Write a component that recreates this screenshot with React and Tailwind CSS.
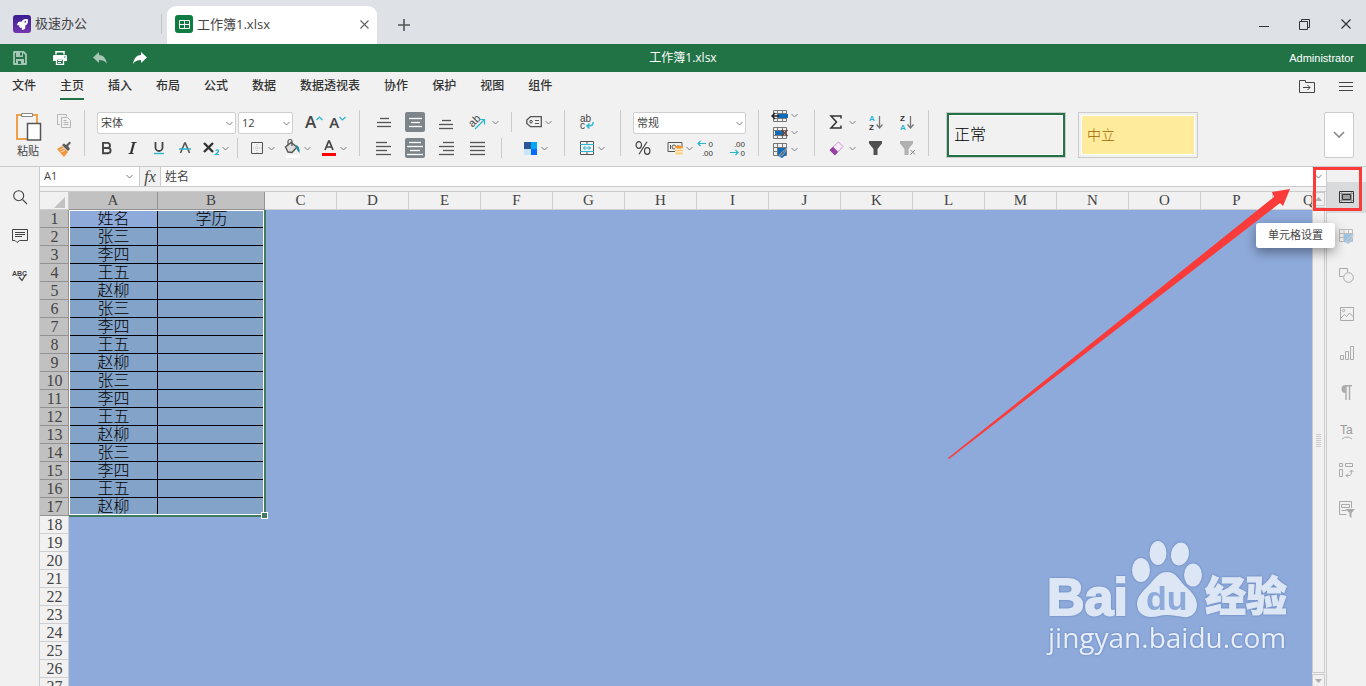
import React, { useState } from 'react';
import { FaRocket } from 'react-icons/fa';

const MENU = ['文件', '主页', '插入', '布局', '公式', '数据', '数据透视表', '协作', '保护', '视图', '组件'];
const COLUMNS = 'ABCDEFGHIJKLMNOPQ'.split('');
const NAMES = ['张三', '李四', '王五', '赵柳'];
const ROW_COUNT = 27;
const LAST_SELECTED = 17;

// rows 2..17 repeat the same four names
const nameOf = (row) => (row === 1 ? '姓名' : NAMES[(row - 2) % 4]);

const Svg = ({ w, h, children, className = '' }) => (
  <svg width={w} height={h} viewBox={`0 0 ${w} ${h}`} fill="none" className={`shrink-0 overflow-visible ${className}`}>
    {children}
  </svg>
);

const Chevron = ({ className = '' }) => (
  <Svg w={7} h={5} className={className}>
    <path d="M.5 1l3 3 3-3" stroke="#7f7f7f" />
  </Svg>
);

const IconButton = ({ label, active = false, children }) => (
  <button
    aria-label={label}
    className={`flex h-5 w-5 shrink-0 items-center justify-center rounded-xs ${active ? 'bg-[#7d858c]' : ''}`}
  >
    {children}
  </button>
);

const MenuArrow = ({ label }) => (
  <button aria-label={label} className="flex h-5 w-2 shrink-0 items-center justify-center">
    <Chevron />
  </button>
);

const Separator = () => <div className="mt-[3px] h-[46px] w-px shrink-0 bg-[#cbcbcb]" />;
const SmallSeparator = () => <div className="h-5 w-px shrink-0 bg-[#cbcbcb]" />;

const Dropdown = ({ label, options, className }) => (
  <div className={`relative h-[22px] shrink-0 ${className}`}>
    <select
      aria-label={label}
      className="block h-full w-full appearance-none rounded-xs border border-[#cfcfcf] bg-white pl-[3px] text-[11px] leading-5 text-[#444]"
    >
      {options.map((o) => (
        <option key={o}>{o}</option>
      ))}
    </select>
    <Chevron className="pointer-events-none absolute right-[3px] top-[9px]" />
  </div>
);

const Lines = ({ rows, color = '#555' }) => (
  <Svg w={16} h={15}>
    {rows.map(([x1, x2, y]) => (
      <path key={y} d={`M${x1} ${y}.5H${x2}`} stroke={color} strokeWidth="1.3" />
    ))}
  </Svg>
);

/* ---------- top bars ---------- */

const TabStrip = () => (
  <div className="flex h-11 shrink-0 bg-[#dee1e6] text-[13px] text-[#444]">
    <button className="flex w-[161px] items-center gap-1 pl-[13px] pt-1">
      <span className="flex h-[18px] w-[18px] items-center justify-center rounded-[3px] bg-linear-to-b from-[#3a1c93] to-[#7436ae]">
        <FaRocket size={11} color="#fff" />
      </span>
      极速办公
    </button>
    <div className="mt-[14px] h-5 w-px bg-[#c0c3c7]" />
    <div className="ml-[5px] mt-[6px] flex w-[210px] items-center rounded-t-[9px] bg-white px-2 pb-[2px]">
      <span className="mr-1 flex h-[18px] w-[18px] items-center justify-center rounded-[3px] bg-[#107c41]">
        <Svg w={11} h={9}>
          <path d="M.5.5h10v8H.5zM5.5.5v8M.5 4.5h10" stroke="#fff" />
        </Svg>
      </span>
      <span className="flex-1 pt-[2px]">工作簿1.xlsx</span>
      <button aria-label="关闭标签">
        <Svg w={9} h={9}>
          <path d="M.5.5l8 8M8.500.5l-8 8" stroke="#666" strokeWidth="1.2" />
        </Svg>
      </button>
    </div>
    <button aria-label="新建标签" className="ml-[21px] pt-[6px]">
      <Svg w={12} h={12}>
        <path d="M6 0v12M0 6h12" stroke="#555" strokeWidth="1.6" />
      </Svg>
    </button>
    <div className="ml-auto flex pt-1">
      <button aria-label="最小化" className="flex w-[41px] items-center justify-center">
        <Svg w={10} h={11}>
          <path d="M0 7.5h10" stroke="#333" />
        </Svg>
      </button>
      <button aria-label="还原" className="flex w-[41px] items-center justify-center">
        <Svg w={11} h={11}>
          <path d="M.5 2.5h8v8h-8zM2.500 2.500v-2h8v8h-2" stroke="#333" />
        </Svg>
      </button>
      <button aria-label="关闭" className="flex w-[41px] items-center justify-center">
        <Svg w={10} h={10}>
          <path d="M.5.5l9 9M9.500.5l-9 9" stroke="#333" strokeWidth="1.2" />
        </Svg>
      </button>
    </div>
  </div>
);

const TitleBar = () => (
  <header className="grid h-7 shrink-0 grid-cols-3 items-center bg-[#217346] text-xs text-white">
    <div className="flex gap-5 pl-[10px]">
      <IconButton label="保存">
        <Svg w={14} h={14}>
          <path d="M1 1h9.500L13 3.500V13H1z" stroke="#a6c7b5" strokeWidth="1.8" strokeLinejoin="round" />
          <path d="M3 1h7v5H3zM3 8h8v5H3z" fill="#a6c7b5" />
          <path d="M7 1.500h2v3H7zM5 10h3v3H5z" fill="#217346" />
        </Svg>
      </IconButton>
      <IconButton label="打印">
        <Svg w={14} h={14}>
          <path d="M3 3.500V.8h8v2.700" stroke="#fff" strokeWidth="1.5" />
          <path d="M1 4h12a1 1 0 011 1v5h-3V8H3v2H0V5a1 1 0 011-1z" fill="#fff" />
          <path d="M3.500 8h7v5.300h-7z" fill="#217346" stroke="#fff" strokeWidth="1.3" />
          <path d="M5 9.500h4M5 11.500h3" stroke="#fff" />
          <path d="M11 6h1.500" stroke="#217346" />
        </Svg>
      </IconButton>
      <IconButton label="撤销">
        <Svg w={14} h={12}>
          <path d="M6 0v3c4 0 7 3 8 9-2-3-4-4-8-4v3L0 5.500z" fill="#a6c7b5" />
        </Svg>
      </IconButton>
      <IconButton label="重做">
        <Svg w={14} h={12}>
          <path d="M8 0v3C4 3 1 6 0 12c2-3 4-4 8-4v3l6-5.500z" fill="#fff" />
        </Svg>
      </IconButton>
    </div>
    <div className="text-center">工作簿1.xlsx</div>
    <div className="pr-3 text-right font-['Liberation_Sans',sans-serif] text-[11px] leading-4">Administrator</div>
  </header>
);

const MenuBar = () => {
  const [current, setCurrent] = useState('主页');
  return (
    <nav className="flex h-[33px] shrink-0 items-start gap-6 px-3 text-xs font-medium text-[#333]">
      {MENU.map((m) => (
        <button
          key={m}
          onClick={() => setCurrent(m)}
          className={`h-7 shrink-0 border-b-2 pt-[2px] ${m === current ? 'border-[#217346]' : 'border-transparent'}`}
        >
          {m}
        </button>
      ))}
      <div className="ml-auto flex items-center gap-6 pr-px pt-2">
        <button aria-label="打开文件位置">
          <Svg w={16} h={13}>
            <path d="M.5.5h6v2h9v10H.5zM4 7.500h7M8.500 5L11 7.500 8.500 10" stroke="#444" />
          </Svg>
        </button>
        <button aria-label="更多">
          <Svg w={14} h={13}>
            <path d="M0 2.500h14M0 6.500h14M0 10.500h14" stroke="#444" />
          </Svg>
        </button>
      </div>
    </nav>
  );
};

/* ---------- ribbon ---------- */

const Rows = ({ children }) => <div className="mt-[5px] flex flex-col gap-1">{children}</div>;
const FirstRow = ({ children }) => <div className="flex h-[22px] items-start">{children}</div>;
const SecondRow = ({ children }) => <div className="flex h-5 items-center">{children}</div>;

const ClipboardGroup = () => (
  <div className="flex w-[84px] shrink-0 gap-3 pl-[14px]">
    <button className="mt-[5px] flex w-7 flex-col items-center text-[11px] leading-[18px] text-[#444]">
      <Svg w={28} h={30}>
        <path d="M3 3h20v24H3z" fill="#f4f4f4" stroke="#f0a04b" strokeWidth="2" />
        <path d="M7.500 1.500h11v3h-11z" fill="#fff" stroke="#888" />
        <path d="M13.500 11.500h13v16.500h-13z" fill="#fff" stroke="#555" strokeWidth="1.5" />
      </Svg>
      粘贴
    </button>
    <Rows>
      <FirstRow>
        <IconButton label="复制">
          <Svg w={16} h={16}>
            <path d="M4 10.500H1.500V.5h9v2" stroke="#b5b5b5" />
            <path d="M5.500 3.500h6l3 3v7h-9zM7.500 6.500h3M7.500 8.500h5M7.500 10.500h5" stroke="#b5b5b5" />
          </Svg>
        </IconButton>
      </FirstRow>
      <SecondRow>
        <IconButton label="格式刷">
          <Svg w={16} h={16}>
            <path d="M1 9l5-3 6 6-4 5z" fill="#f0963c" />
            <path d="M4 10l4-2M5 12l4-2" stroke="#fbe0c4" />
            <path d="M6 5l6 6 2-2-2-3 3-3-1.500-1.500L10 5 8 3.500z" fill="#5a5a5a" />
          </Svg>
        </IconButton>
      </SecondRow>
    </Rows>
  </div>
);

const FontGroup = () => (
  <div className="w-[274px] shrink-0 pl-3 text-[#444]">
    <Rows>
      <FirstRow>
        <Dropdown label="字体" options={['宋体', '黑体', '楷体']} className="w-[139px]" />
        <Dropdown label="字号" options={['12', '14', '16']} className="ml-[2px] w-[55px]" />
        <button aria-label="增大字号" className="ml-3 flex h-5 items-start text-[17px] font-semibold leading-5">
          A
          <Svg w={7} h={5} className="mt-1">
            <path d="M.5 4l3-3 3 3" stroke="#27b5cf" strokeWidth="1.2" />
          </Svg>
        </button>
        <button aria-label="减小字号" className="ml-[6px] flex h-5 items-start text-[15px] font-semibold leading-5">
          A
          <Svg w={7} h={5} className="mt-1">
            <path d="M.5 1l3 3 3-3" stroke="#27b5cf" strokeWidth="1.2" />
          </Svg>
        </button>
      </FirstRow>
      <SecondRow>
        <div className="flex gap-[6px]">
          <IconButton label="加粗">
            <Svg w={12} h={14}>
              <path
                d="M2 1.900h4.500a2.500 2.500 0 010 5H2zM2 7h5a2.600 2.600 0 010 5.200H2z"
                stroke="#444"
                strokeWidth="1.9"
              />
            </Svg>
          </IconButton>
          <IconButton label="倾斜">
            <Svg w={10} h={14}>
              <path d="M3.500 1.500h5M.5 12.500h5" stroke="#333" strokeWidth="1.2" />
              <path d="M6 1.500L3 12.500" stroke="#333" strokeWidth="2.2" />
            </Svg>
          </IconButton>
          <IconButton label="下划线">
            <Svg w={12} h={14}>
              <path d="M2.500 1v5.500a3.500 3.500 0 007 0V1" stroke="#444" strokeWidth="1.8" />
              <path d="M1 12.500h10" stroke="#27b5cf" strokeWidth="1.4" />
            </Svg>
          </IconButton>
          <IconButton label="删除线">
            <Svg w={12} h={14}>
              <path d="M1.500 12L5.700 2h.6l4.200 10" stroke="#555" strokeWidth="1.6" />
              <path d="M0 8h12" stroke="#27b5cf" strokeWidth="1.5" />
            </Svg>
          </IconButton>
          <IconButton label="下标">
            <Svg w={16} h={14}>
              <path d="M1 2l9 9M10 2l-9 9" stroke="#333" strokeWidth="2.4" />
              <path d="M12.500 9.500q3-1.500 3 .5 0 1-3 3.500h3.500" stroke="#27b5cf" strokeWidth="1.2" />
            </Svg>
          </IconButton>
        </div>
        <MenuArrow label="上下标选项" />
        <div className="ml-2">
          <SmallSeparator />
        </div>
        <div className="ml-[9px] flex gap-2">
          <div className="flex">
            <IconButton label="边框">
              <Svg w={12} h={12}>
                <path d="M.5.5h11v11H.5z" stroke="#555" />
                <path d="M6 2v9M2 6h9" stroke="#bbb" strokeDasharray="1 1" />
              </Svg>
            </IconButton>
            <MenuArrow label="边框选项" />
          </div>
          <div className="flex">
            <IconButton label="填充颜色">
              <Svg w={18} h={20}>
                <path d="M2 17h14v3H2z" fill="#fff" />
                <path d="M1.500 9L7 4.500 13 9l-5 5.500-4-.5z" fill="#ddd" stroke="#555" strokeWidth="1.4" />
                <path d="M4 7V3.500a2 2 0 014 0V8" stroke="#555" strokeWidth="1.2" />
                <path d="M11 7q5 0 4.500 8-2-1-3-5z" fill="#1d8b9e" />
              </Svg>
            </IconButton>
            <MenuArrow label="填充颜色选项" />
          </div>
          <div className="flex">
            <IconButton label="字体颜色">
              <Svg w={14} h={16}>
                <path d="M3 10L6.700 1h.6L11 10M4.500 7h5" stroke="#444" strokeWidth="1.7" />
                <path d="M0 13h14v3H0z" fill="#f00" />
              </Svg>
            </IconButton>
            <MenuArrow label="字体颜色选项" />
          </div>
        </div>
      </SecondRow>
    </Rows>
  </div>
);

const AlignGroup = () => (
  <div className="w-[204px] shrink-0 pl-[14px]">
    <Rows>
      <FirstRow>
        <div className="flex gap-[11px]">
          <IconButton label="顶端对齐">
            <Lines rows={[[4, 13, 3], [1, 15, 7], [1, 15, 11]]} />
          </IconButton>
          <IconButton label="垂直居中" active>
            <Lines color="#fff" rows={[[2, 15, 3], [4, 13, 7], [2, 15, 11]]} />
          </IconButton>
          <IconButton label="底端对齐">
            <Lines rows={[[4, 13, 5], [1, 15, 9], [1, 15, 13]]} />
          </IconButton>
          <IconButton label="文字方向">
            <Svg w={18} h={18}>
              <text x="1" y="12" transform="rotate(-45 6 9)" fontSize="11" fontFamily="Liberation Sans" fill="#444">
                ab
              </text>
              <path d="M7 16l9.500-9.500M11.500 6.500h5v5" stroke="#27b5cf" strokeWidth="1.2" />
            </Svg>
          </IconButton>
        </div>
        <div className="ml-1 flex">
          <MenuArrow label="文字方向选项" />
        </div>
        <div className="ml-3 flex">
          <SmallSeparator />
        </div>
        <div className="ml-3 flex">
          <IconButton label="命名范围">
            <Svg w={16} h={12}>
              <path d="M4.500.7h10.800v10H4.500L.8 7.500V4z" stroke="#555" strokeWidth="1.3" />
              <circle cx="5" cy="5.7" r="1.3" stroke="#444" />
              <path d="M9 4.500h4M9 7.500h4" stroke="#555" />
            </Svg>
          </IconButton>
          <MenuArrow label="命名范围选项" />
        </div>
      </FirstRow>
      <SecondRow>
        <div className="flex gap-[11px]">
          <IconButton label="左对齐">
            <Lines rows={[[0, 11, 1], [0, 15, 5], [0, 11, 9], [0, 15, 13]]} />
          </IconButton>
          <IconButton label="居中" active>
            <Lines color="#fff" rows={[[2, 14, 1], [0, 16, 5], [3, 13, 9], [0, 16, 13]]} />
          </IconButton>
          <IconButton label="右对齐">
            <Lines rows={[[5, 16, 1], [1, 16, 5], [5, 16, 9], [1, 16, 13]]} />
          </IconButton>
          <IconButton label="两端对齐">
            <Lines rows={[[1, 16, 1], [1, 16, 5], [1, 16, 9], [1, 16, 13]]} />
          </IconButton>
        </div>
        <div className="ml-[14px]">
          <SmallSeparator />
        </div>
        <div className="ml-[18px] flex">
          <IconButton label="配色">
            <Svg w={13} h={13}>
              <path d="M0 0h7v7H0z" fill="#2b579a" />
              <path d="M7 0h6v7H7z" fill="#00a8f4" />
              <path d="M0 7h7v6H0z" fill="#c7e6fb" />
              <path d="M7 7h6v6H7z" fill="#0a6cff" />
            </Svg>
          </IconButton>
          <MenuArrow label="配色选项" />
        </div>
      </SecondRow>
    </Rows>
  </div>
);

const WrapGroup = () => (
  <div className="w-[55px] shrink-0 pl-3">
    <Rows>
      <FirstRow>
        <IconButton label="自动换行">
          <Svg w={16} h={16}>
            <text x="1" y="8" fontSize="10" fontFamily="Liberation Sans" fill="#444">ab</text>
            <text x="1" y="15" fontSize="10" fontFamily="Liberation Sans" fill="#444">c</text>
            <path d="M14 8v1.500q0 2.500-6 2.500M10.500 9.500L8 12l2.500 2.500" stroke="#27b5cf" strokeWidth="1.4" />
          </Svg>
        </IconButton>
      </FirstRow>
      <SecondRow>
        <IconButton label="合并居中">
          <Svg w={14} h={14}>
            <path d="M.5.5h13v13H.5zM7 .5v3M7 10.500v3" stroke="#555" />
            <path d="M0 3.500h14M0 10.500h14M3 7h8M5.500 5l-2 2 2 2M8.500 5l2 2-2 2" stroke="#27b5cf" />
          </Svg>
        </IconButton>
        <MenuArrow label="合并选项" />
      </SecondRow>
    </Rows>
  </div>
);

const DecimalIcon = ({ top, bottom, children }) => (
  <Svg w={18} h={18}>
    {children}
    <text x="17" y="8" textAnchor="end" fontSize="8" fontFamily="Liberation Sans" fill="#333">{top}</text>
    <text x="17" y="17" textAnchor="end" fontSize="8" fontFamily="Liberation Sans" fill="#333">{bottom}</text>
  </Svg>
);

const NumberGroup = () => (
  <div className="w-[137px] shrink-0 pl-3">
    <Rows>
      <FirstRow>
        <Dropdown label="数字格式" options={['常规', '数值', '货币']} className="w-[113px]" />
      </FirstRow>
      <SecondRow>
        <IconButton label="百分比">
          <Svg w={16} h={14}>
            <ellipse cx="3.8" cy="4" rx="2.700" ry="3.300" stroke="#444" strokeWidth="1.2" />
            <ellipse cx="12.2" cy="10" rx="2.700" ry="3.300" stroke="#444" strokeWidth="1.2" />
            <path d="M12 .7L4 13.300" stroke="#444" strokeWidth="1.2" />
          </Svg>
        </IconButton>
        <div className="ml-3 flex">
          <IconButton label="货币">
            <Svg w={17} h={14}>
              <path d="M1 1.500h14v9H1z" stroke="#555" />
              <circle cx="7" cy="6" r="2" stroke="#555" />
              <path d="M3.500 4v4M11 4v4" stroke="#555" />
              <path d="M8 5.500h8v7H8z" fill="#fdeac4" />
              <path d="M8 9.500h8" stroke="#f3c77c" />
              <ellipse cx="12" cy="6" rx="4" ry="1.5" fill="#f2932e" />
              <ellipse cx="12" cy="12.5" rx="4" ry="1.3" fill="#fbd48a" />
            </Svg>
          </IconButton>
          <MenuArrow label="货币选项" />
        </div>
        <div className="ml-[2px] flex gap-3">
          <IconButton label="减少小数位">
            <DecimalIcon top="0" bottom=".00">
              <path d="M2 4.500h8M4.500 2L2 4.500 4.500 7" stroke="#27b5cf" strokeWidth="1.2" />
            </DecimalIcon>
          </IconButton>
          <IconButton label="增加小数位">
            <DecimalIcon top=".00" bottom="0">
              <path d="M2 13.500h8M7.500 11l2.500 2.500L7.500 16" stroke="#27b5cf" strokeWidth="1.2" />
            </DecimalIcon>
          </IconButton>
        </div>
      </SecondRow>
    </Rows>
  </div>
);

const CellsGroup = () => (
  <div className="flex w-[55px] shrink-0 flex-col pl-[11px]">
    <div className="flex h-[17px] items-center">
      <IconButton label="插入单元格">
        <Svg w={16} h={12}>
          <path d="M1.500.5h13v11h-13zM5.500.5v11M10.500.5v11M1.500 3.500h13M1.500 8.500h13" stroke="#777" />
          <path d="M6 4h10v4H6z" fill="#0f6cbd" />
          <path d="M0 6h7M3 3L0 6l3 3" stroke="#222" strokeWidth="1.4" />
        </Svg>
      </IconButton>
      <MenuArrow label="插入选项" />
    </div>
    <div className="flex h-[17px] items-center">
      <IconButton label="删除单元格">
        <Svg w={16} h={12}>
          <path d="M1.500.5h13v11h-13zM5.500.5v11M10.500.5v11M1.500 3.500h13M1.500 8.500h13" stroke="#777" />
          <path d="M3 4h9v4H3z" fill="#0f6cbd" />
          <path d="M9.500 3l6 6M15.500 3l-6 6" stroke="#6b4038" strokeWidth="1.6" />
        </Svg>
      </IconButton>
      <MenuArrow label="删除选项" />
    </div>
    <div className="flex h-[17px] items-center">
      <IconButton label="单元格格式">
        <Svg w={16} h={13}>
          <path d="M1.500.5h13v12h-13zM5.500.5v12M10.500.5v12M1.500 4.500h13M1.500 8.500h13" stroke="#777" />
          <path d="M6 5h8v7l-4 3-4-2z" fill="#0f6cbd" />
          <path d="M16 4l-7 6-3 4 5-2z" fill="#5c6b78" stroke="#ddd" strokeWidth=".5" />
        </Svg>
      </IconButton>
      <MenuArrow label="格式选项" />
    </div>
  </div>
);

const Funnel = ({ color, x = false }) => (
  <Svg w={16} h={14}>
    <path d="M1 0h13v2.500L9.500 8v6h-4V8L1 2.500z" fill={color} />
    {x && <path d="M11.500 9l4.500 4.500M16 9l-4.500 4.500" stroke="#888" />}
  </Svg>
);

const SortIcon = ({ first, second, firstColor, secondColor }) => (
  <Svg w={16} h={16}>
    <text x="1" y="7" fontSize="8" fontWeight="bold" fontFamily="Liberation Sans" fill={firstColor}>{first}</text>
    <text x="1" y="16" fontSize="8" fontWeight="bold" fontFamily="Liberation Sans" fill={secondColor}>{second}</text>
    <path d="M11.500 2v12M8.500 10.500l3 3.500 3-3.500" stroke="#777" strokeWidth="1.3" />
  </Svg>
);

const EditGroup = () => (
  <div className="w-[113px] shrink-0 pl-[11px]">
    <Rows>
      <FirstRow>
        <IconButton label="求和">
          <Svg w={14} h={14}>
            <path d="M12 3.500V1H2l5.500 6L2 13h10v-2.500" stroke="#333" strokeWidth="1.5" />
          </Svg>
        </IconButton>
        <div className="ml-[2px] flex">
          <MenuArrow label="函数选项" />
        </div>
        <div className="ml-[10px] flex gap-[11px]">
          <IconButton label="升序">
            <SortIcon first="A" second="Z" firstColor="#27b5cf" secondColor="#333" />
          </IconButton>
          <IconButton label="降序">
            <SortIcon first="Z" second="A" firstColor="#333" secondColor="#27b5cf" />
          </IconButton>
        </div>
      </FirstRow>
      <SecondRow>
        <IconButton label="清除">
          <Svg w={15} h={15}>
            <path d="M1 9l8.500-8 4.500 4.500L6 14z" fill="#f8ecf8" stroke="#c994cf" />
            <path d="M.5 9L4 5.800l5 5L6 14.500z" fill="#9a3fa5" />
          </Svg>
        </IconButton>
        <div className="ml-[2px] flex">
          <MenuArrow label="清除选项" />
        </div>
        <div className="ml-[10px] flex gap-[11px]">
          <IconButton label="筛选">
            <Funnel color="#505050" />
          </IconButton>
          <IconButton label="清除筛选">
            <Funnel color="#b0b0b0" x />
          </IconButton>
        </div>
      </SecondRow>
    </Rows>
  </div>
);

const StyleGallery = () => (
  <div className="mt-[5px] flex flex-1 gap-3 pl-[17px] pr-3">
    <button className="h-[46px] w-[120px] shrink-0 border border-[#cbcbcb] bg-white">
      <span className="flex h-full items-center border-2 border-[#217346] p-px">
        <span className="flex h-full w-full items-center bg-[#f1f1f1] pb-[2px] pl-1 text-base font-light text-black">
          正常
        </span>
      </span>
    </button>
    <button className="h-[46px] w-[120px] shrink-0 border border-[#cbcbcb] p-[2px]">
      <span className="flex h-full items-center border border-white bg-[#ffeb9c] pl-[5px] text-sm font-light text-[#9c6500]">
        中立
      </span>
    </button>
    <button
      aria-label="更多样式"
      className="ml-auto flex h-[46px] w-[30px] items-center justify-center rounded-xs border border-[#cbcbcb] bg-white"
    >
      <Svg w={12} h={8}>
        <path d="M1 1l5 5 5-5" stroke="#888" strokeWidth="1.6" />
      </Svg>
    </button>
  </div>
);

const Ribbon = () => (
  <div className="flex h-[62px] shrink-0 border-b border-[#cbcbcb] pt-[2px]">
    <ClipboardGroup />
    <Separator />
    <FontGroup />
    <Separator />
    <AlignGroup />
    <Separator />
    <WrapGroup />
    <Separator />
    <NumberGroup />
    <Separator />
    <CellsGroup />
    <Separator />
    <EditGroup />
    <Separator />
    <StyleGallery />
  </div>
);

/* ---------- side bars ---------- */

const SideButton = ({ label, active = false, children }) => (
  <button
    aria-label={label}
    className={`flex h-[31px] w-full shrink-0 items-center justify-center pb-px ${active ? 'bg-[#d8dadc]' : ''}`}
  >
    {children}
  </button>
);

const LeftBar = () => (
  <aside className="flex w-10 shrink-0 flex-col gap-2 border-r border-[#cbcbcb] pt-[15px]">
    <SideButton label="查找">
      <Svg w={14} h={14}>
        <circle cx="5.7" cy="5.7" r="5" stroke="#444" strokeWidth="1.1" />
        <path d="M9.500 9.500L14 14" stroke="#444" strokeWidth="1.1" />
      </Svg>
    </SideButton>
    <SideButton label="批注">
      <Svg w={16} h={14}>
        <path d="M.5.5h15v11H7.500l-2.500 2-2-2H.5zM3 3.500h10M3 5.500h10M3 7.500h7" stroke="#444" />
      </Svg>
    </SideButton>
    <SideButton label="拼写检查">
      <Svg w={14} h={14}>
        <text x="-1" y="8" fontSize="7" fontWeight="bold" fontFamily="Liberation Sans" fill="#444">ABC</text>
        <path d="M6 9l3 3.500 4-6.500" stroke="#444" strokeWidth="1.3" />
      </Svg>
    </SideButton>
  </aside>
);

const RightBar = () => (
  <aside className="flex w-10 shrink-0 flex-col gap-2 border-l border-[#cbcbcb] pt-[15px]">
    <SideButton label="单元格设置" active>
      <Svg w={15} h={12}>
        <path d="M2.500.5v11M12.500.5v11M.5 2.500h14M.5 9.500h14" stroke="#999" />
        <path d="M.5.5h14v11H.5z" stroke="#333" />
        <path d="M3.500 3.500h8v5h-8z" fill="#a0a0a0" stroke="#333" />
      </Svg>
    </SideButton>
    <SideButton label="表格设置">
      <Svg w={16} h={14}>
        <path d="M.5.5h13v12H.5zM5 .5v12M9.500.5v12M.5 4.500h13M.5 8.500h13" stroke="#bbb" />
        <path d="M5 5h8v7l-4 3-4-2z" fill="#9cc4e4" />
        <path d="M16 4l-7 6-3 4 5-2z" fill="#aab4bc" stroke="#eee" strokeWidth=".5" />
      </Svg>
    </SideButton>
    <SideButton label="形状设置">
      <Svg w={15} h={15}>
        <path d="M4 8.500H.5v-8h8V4" stroke="#aaa" />
        <circle cx="9.5" cy="9.5" r="4.8" stroke="#aaa" />
      </Svg>
    </SideButton>
    <SideButton label="图片设置">
      <Svg w={14} h={14}>
        <path d="M.5.5h13v13H.5zM1 11l3.500-3.500 2 2 3-3.500 4 4" stroke="#aaa" />
        <circle cx="3.5" cy="3.5" r="1.2" stroke="#aaa" />
      </Svg>
    </SideButton>
    <SideButton label="图表设置">
      <Svg w={14} h={14}>
        <path d="M.5 9.500h3v4h-3zM5.500 5.500h3v8h-3zM10.500.5h3v13h-3z" stroke="#aaa" />
      </Svg>
    </SideButton>
    <SideButton label="段落设置">
      <Svg w={14} h={15}>
        <path d="M5.500 0v8a4 4 0 010-8zM5 0h7v1.500H5z" fill="#aaa" />
        <path d="M6 0v15M9.500 0v15" stroke="#aaa" strokeWidth="1.4" />
      </Svg>
    </SideButton>
    <SideButton label="艺术字设置">
      <Svg w={14} h={17}>
        <text x="0" y="11" fontSize="12" fontFamily="Liberation Sans" fill="#999">Ta</text>
        <path d="M2 16q5-4 10 0" stroke="#aaa" />
      </Svg>
    </SideButton>
    <SideButton label="透视表设置">
      <Svg w={15} h={14}>
        <path d="M.5.5h3v3h-3zM6.500.5h7v3h-7zM.5 6.500h3v7h-3z" stroke="#aaa" />
        <path d="M7 12.500h4q1.500 0 1.500-5.500M9 10.500l-2 2 2 2M10.500 9l2-2 2 2" stroke="#aaa" />
      </Svg>
    </SideButton>
    <SideButton label="切片器设置">
      <Svg w={16} h={17}>
        <path d="M12.500 7V.5H.5v13h7M2.500 3.500h8v3h-8zM2.500 9.500h5" stroke="#aaa" />
        <path d="M6.500 8H16l-3.500 4v5l-2-1.500V12z" fill="#aaa" />
      </Svg>
    </SideButton>
  </aside>
);

/* ---------- sheet ---------- */

const FormulaBar = () => (
  <div className="flex h-5 shrink-0 border-b border-[#cbcbcb] bg-white text-xs text-[#444]">
    <div className="flex w-[100px] shrink-0 items-center border-r border-[#cbcbcb] pr-[6px]">
      <input aria-label="名称框" defaultValue="A1" className="w-full min-w-0 pl-1 text-[11px] outline-none" />
      <button aria-label="选择名称">
        <Chevron />
      </button>
    </div>
    <button
      aria-label="插入函数"
      className="w-[21px] shrink-0 border-r border-[#cbcbcb] bg-[#f1f1f1] font-['Liberation_Serif',serif] text-base italic leading-[18px]"
    >
      fx
    </button>
    <input aria-label="编辑栏" defaultValue="姓名" className="min-w-0 flex-1 pl-1 outline-none" />
    <button aria-label="展开编辑栏" className="pr-1">
      <Chevron />
    </button>
  </div>
);

const Sheet = () => (
  <div className="relative min-w-0 flex-1 overflow-hidden bg-[#8eaadb]">
    <table className="w-[1305px] table-fixed border-separate border-spacing-0 text-center text-base leading-[17px] text-black">
      <colgroup>
        <col className="w-[29px]" />
        <col className="w-[89px]" />
        <col className="w-[107px]" />
        {COLUMNS.slice(2).map((c) => (
          <col key={c} className="w-[72px]" />
        ))}
      </colgroup>
      <thead className="font-['Liberation_Serif',serif] text-[#444]">
        <tr className="h-[18px]">
          <td className="border-b border-r border-[#cbcbcb] bg-[#f1f1f1] p-0">
            <Svg w={26} h={15} className="block">
              <path d="M25 4v11H14z" fill="#c1c1c1" />
            </Svg>
          </td>
          {COLUMNS.map((c, i) => (
            <th
              key={c}
              scope="col"
              className={`border-b border-r p-0 text-[15px] font-normal ${i < 2 ? 'border-[#929292] bg-[#c1c1c1]' : 'border-[#cfcfcf] bg-[#f1f1f1]'}`}
            >
              {c}
            </th>
          ))}
        </tr>
      </thead>
      <tbody>
        {Array.from({ length: ROW_COUNT }, (_, i) => i + 1).map((row) => (
          <tr key={row} className="h-[18px]">
            <th
              scope="row"
              className={`border-b border-r p-0 pl-px font-['Liberation_Serif',serif] font-normal text-[#444] ${row <= LAST_SELECTED ? 'border-[#929292] bg-[#c1c1c1]' : 'border-[#cfcfcf] bg-[#f1f1f1]'}`}
            >
              {row}
            </th>
            {row <= LAST_SELECTED && (
              <>
                <td className={`border-b border-r border-black p-0 pl-px font-light ${row === 1 ? '' : 'bg-[#83a3c8]'}`}>
                  {nameOf(row)}
                </td>
                <td className="border-b border-black bg-[#83a3c8] p-0 font-light">{row === 1 ? '学历' : ''}</td>
              </>
            )}
          </tr>
        ))}
      </tbody>
    </table>

    {/* selection frame with its fill handle */}
    <div className="pointer-events-none absolute left-[29px] top-[18px] h-[307px] w-[197px] border-b-2 border-r-2 border-[#447b60]">
      <div className="h-full w-full border border-white" />
      <div className="absolute -bottom-1 -right-1 h-[7px] w-[7px] border border-white bg-[#447b60]" />
    </div>
  </div>
);

const ScrollBar = () => (
  <div className="flex w-[14px] shrink-0 flex-col gap-px pr-px">
    <button aria-label="向上滚动" className="flex h-[14px] shrink-0 items-center justify-center border border-[#cbcbcb]">
      <Svg w={7} h={4}>
        <path d="M0 4l3.500-4L7 4z" fill="#adadad" />
      </Svg>
    </button>
    <div className="flex flex-1 flex-col items-center justify-center gap-px border border-[#cbcbcb]">
      {[0, 1, 2, 3, 4, 5, 6].map((n) => (
        <span key={n} className="h-px w-[5px] bg-[#cbcbcb]" />
      ))}
    </div>
    <button aria-label="向下滚动" className="flex h-3 shrink-0 items-center justify-center border border-b-0 border-[#cbcbcb]">
      <Svg w={7} h={4}>
        <path d="M0 0l3.500 4L7 0z" fill="#adadad" />
      </Svg>
    </button>
  </div>
);

const Watermark = () => (
  <svg
    width="248"
    height="124"
    viewBox="0 0 248 124"
    className="pointer-events-none absolute bottom-6 right-[72px] drop-shadow-[0_0_1px_#5f7fb8]"
  >
    <g fill="#dce6f4">
      <text x="1" y="77" fontSize="52" fontWeight="bold" fontFamily="Liberation Sans" stroke="#dce6f4" strokeWidth="2">
        Bai
      </text>
      <ellipse cx="95" cy="32" rx="9" ry="12" />
      <ellipse cx="112" cy="15" rx="8.5" ry="12" />
      <ellipse cx="134" cy="16" rx="9" ry="11.5" transform="rotate(12 134 16)" />
      <ellipse cx="147" cy="37" rx="9" ry="11.5" />
      <path d="M121 34c9 0 12 8 18 14 7 6 12 12 12 19 0 8-6 13-14 12-6-1-10-2-16-2s-10 2-16 2c-8 0-14-5-14-13 0-7 5-12 11-18 7-7 10-14 19-14z" />
      <text x="159" y="73" fontSize="41" fontWeight="900" fontFamily="Noto Sans CJK SC" stroke="#dce6f4">
        经验
      </text>
    </g>
    <text x="100" y="72" fontSize="34" fontWeight="bold" fontFamily="Liberation Sans" fill="#8eaadb">du</text>
    <text x="2" y="110" fontSize="28" fontWeight="500" fontFamily="Open Sans" fill="#e8eef8">jingyan.baidu.com</text>
  </svg>
);

export default function App() {
  return (
    <div className="flex h-screen flex-col overflow-hidden bg-[#f1f1f1] font-['Open_Sans','Noto_Sans_CJK_SC',sans-serif]">
      <TabStrip />
      <TitleBar />
      <MenuBar />
      <Ribbon />
      <main className="relative flex min-h-0 flex-1">
        <LeftBar />
        <section className="flex min-w-0 flex-1 flex-col">
          <FormulaBar />
          <div className="h-[5px] shrink-0 border-b border-[#cbcbcb]" />
          <div className="flex min-h-0 flex-1">
            <Sheet />
            <ScrollBar />
          </div>
        </section>
        <RightBar />

        <Watermark />
        <div
          role="tooltip"
          className="absolute right-[31px] top-14 flex h-[25px] w-[79px] items-center justify-center rounded-[3px] bg-white text-[11px] text-[#444] shadow-[0_4px_12px_rgba(0,0,0,0.4)]"
        >
          单元格设置
        </div>
        <svg width="342" height="271" viewBox="0 0 342 271" className="pointer-events-none absolute right-[76px] top-[22px]">
          <path d="M342 0l-18 3 2 5L0 269l1 1L332 14l3 3z" fill="#fb3b3a" />
        </svg>
        <div className="pointer-events-none absolute right-1 top-0 h-11 w-[49px] border-3 border-[#fb3b3a]" />
      </main>
    </div>
  );
}
